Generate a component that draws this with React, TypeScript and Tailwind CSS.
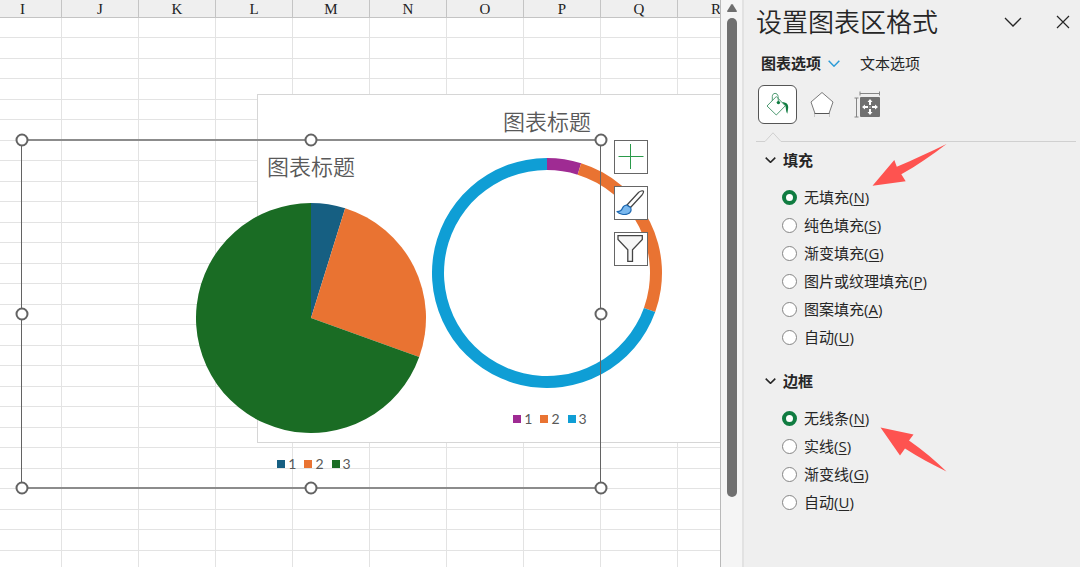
import type { ReactNode } from 'react';

type Slice = { label: string; value: number; fill: string; swatch: string };

const columns = ['I', 'J', 'K', 'L', 'M', 'N', 'O', 'P', 'Q', 'R'];
const rows = Array.from({ length: 27 }, (_, i) => i);

const pieData: Slice[] = [
  { label: '1', value: 4.8, fill: 'fill-[#165f82]', swatch: 'bg-[#165f82]' },
  { label: '2', value: 25.7, fill: 'fill-[#e97332]', swatch: 'bg-[#e97332]' },
  { label: '3', value: 69.5, fill: 'fill-[#1a6c24]', swatch: 'bg-[#1a6c24]' },
];

const ringData: Slice[] = [
  { label: '1', value: 4.8, fill: 'fill-[#9f2b93]', swatch: 'bg-[#9f2b93]' },
  { label: '2', value: 25.7, fill: 'fill-[#e97332]', swatch: 'bg-[#e97332]' },
  { label: '3', value: 69.5, fill: 'fill-[#0f9ed5]', swatch: 'bg-[#0f9ed5]' },
];

const fillOptions = [
  { text: '无填充', hotkey: 'N' },
  { text: '纯色填充', hotkey: 'S' },
  { text: '渐变填充', hotkey: 'G' },
  { text: '图片或纹理填充', hotkey: 'P' },
  { text: '图案填充', hotkey: 'A' },
  { text: '自动', hotkey: 'U' },
];

const borderOptions = [
  { text: '无线条', hotkey: 'N' },
  { text: '实线', hotkey: 'S' },
  { text: '渐变线', hotkey: 'G' },
  { text: '自动', hotkey: 'U' },
];

const handles = [
  'left-0 -top-px',
  'left-1/2 -top-px',
  'left-[calc(100%+1px)] -top-px',
  'left-0 top-1/2',
  'left-[calc(100%+1px)] top-1/2',
  'left-0 top-[calc(100%+1px)]',
  'left-1/2 top-[calc(100%+1px)]',
  'left-[calc(100%+1px)] top-[calc(100%+1px)]',
];

function slicePath(from: number, to: number, outer: number, inner: number) {
  const point = (share: number, r: number) => {
    const a = (share / 100) * Math.PI * 2;
    return `${(115 + r * Math.sin(a)).toFixed(2)} ${(115 - r * Math.cos(a)).toFixed(2)}`;
  };
  const large = to - from > 50 ? 1 : 0;
  return `M${point(from, outer)}A${outer} ${outer} 0 ${large} 1 ${point(to, outer)}L${point(to, inner)}A${inner} ${inner} 0 ${large} 0 ${point(from, inner)}Z`;
}

function Chart({ data, inner, className }: { data: Slice[]; inner: number; className: string }) {
  let start = 0;

  return (
    <section className={`absolute flex w-[580px] flex-col items-center text-[#595959] ${className}`}>
      <h2 className="text-[22px] leading-7 font-[350]">图表标题</h2>
      <svg viewBox="0 0 230 230" className="mt-[23px] size-[230px]" aria-hidden="true">
        {data.map((slice) => {
          const from = start;
          start += slice.value;
          return <path key={slice.label} d={slicePath(from, start, 115, inner)} className={slice.fill} />;
        })}
      </svg>
      <ul className="mt-[21px] flex gap-2 pl-[6px] font-[Lato,sans-serif] text-sm leading-5">
        {data.map((slice) => (
          <li key={slice.label} className="flex items-center gap-[3px]">
            <span className={`size-2 ${slice.swatch}`} />
            {slice.label}
          </li>
        ))}
      </ul>
    </section>
  );
}

function ChartButton({ label, children }: { label: string; children: ReactNode }) {
  return (
    <button type="button" aria-label={label} className="size-[34px] border border-[#666] bg-white">
      <svg viewBox="1 1 32 32" className="size-8" fill="none" strokeLinejoin="round">
        {children}
      </svg>
    </button>
  );
}

function Selection() {
  return (
    <div className="pointer-events-none absolute left-[21px] top-[139px] h-[350px] w-[580px] border-x border-y-2 border-x-[#636363] border-y-[#8c8c8c]">
      {handles.map((place) => (
        <span
          key={place}
          className={`absolute size-[13px] -translate-x-1/2 -translate-y-1/2 rounded-full border-2 border-[#636363] bg-white ${place}`}
        />
      ))}
      <div className="pointer-events-auto absolute -top-px left-full ml-[14px] flex flex-col gap-3">
        <ChartButton label="图表元素">
          <path d="M4.5 16.5h25M16.5 4v25" stroke="#2a9a4a" />
        </ChartButton>
        <ChartButton label="图表样式">
          <path
            d="M13 19 24.5 6.5C26 5 28.500 4.500 29.300 5S29 7.500 28 9L16.500 21.500Z"
            fill="#fff"
            stroke="#444"
            strokeWidth="1.200"
          />
          <path
            d="M12.500 19c-2.500.3-3.500 1.500-4.200 3.500-.6 1.800-2.500 3-5.300 3.200 2.500 2.600 7.500 3.400 10.500 2.300 3.200-1.200 4-4 3.200-6.400Z"
            fill="#7ab8ee"
            stroke="#1c67b0"
            strokeWidth="1.200"
          />
        </ChartButton>
        <ChartButton label="图表筛选器">
          <path
            d="M4 3.700h24.300v3.800l-9.800 10.200v11.600h-4.700V17.700L4 7.500Z"
            fill="#f6f6f6"
            stroke="#444"
            strokeWidth="1.300"
            strokeLinejoin="miter"
          />
        </ChartButton>
      </div>
    </div>
  );
}

function Sheet() {
  return (
    <main className="relative min-w-0 flex-1 overflow-hidden bg-white">
      <table className="-ml-4 w-[771px] table-fixed border-separate border-spacing-0">
        <thead>
          <tr className="h-[18px]">
            {columns.map((name) => (
              <th
                key={name}
                scope="col"
                className="w-[77px] border-b border-r border-[#c4c4c4] bg-[#efefef] p-0 font-['Liberation_Serif',serif] text-[15px] leading-4 font-normal text-[#222] first:w-[78px]"
              >
                {name}
              </th>
            ))}
          </tr>
        </thead>
        <tbody>
          {rows.map((row) => (
            <tr key={row} className="odd:h-5 even:h-[21px]">
              {columns.map((name) => (
                <td key={name} className="border-b border-r border-[#e3e3e3] p-0" />
              ))}
            </tr>
          ))}
        </tbody>
      </table>

      <Chart data={ringData} inner={103} className="left-[257px] top-[94px] h-[349px] border border-[#d6d6d6] bg-white pt-3" />
      <Chart data={pieData} inner={0} className="left-[21px] top-[139px] h-[350px] pt-[13px]" />
      <Selection />
    </main>
  );
}

function ScrollBar() {
  return (
    <div className="flex w-6 shrink-0 flex-col items-center border-l border-r-2 border-l-[#b9b9b9] border-r-[#e2e2e2] bg-[#f5f5f5] pt-1">
      <svg viewBox="0 0 10 8" className="h-2 w-[10px] shrink-0 fill-[#6f6f6f]" aria-hidden="true">
        <path d="M4.200.6a1 1 0 0 1 1.600 0L9.900 7q.2.900-.7.900H.8Q-.1 7.900.1 7Z" />
      </svg>
      <div className="mt-[6px] h-[479px] w-[10px] shrink-0 rounded-full bg-[#707070]" />
    </div>
  );
}

function Chevron({ className }: { className: string }) {
  return (
    <svg viewBox="0 0 18 10" className={className} fill="none" stroke="currentColor" aria-hidden="true">
      <path d="m1 1 8 8 8-8" vectorEffect="non-scaling-stroke" />
    </svg>
  );
}

function OptionGroup({ title, name, options }: { title: string; name: string; options: typeof fillOptions }) {
  return (
    <section className="pl-[21px]">
      <h2>
        <button type="button" className="flex items-center gap-[7px] text-[15px] leading-5 font-bold">
          <Chevron className="h-[6px] w-[11px] stroke-[1.5]" />
          {title}
        </button>
      </h2>
      <div role="radiogroup" aria-label={title} className="mt-[13px] pl-[17px]">
        {options.map((option, i) => (
          <label key={option.hotkey} className="flex h-7 items-center gap-[7px] text-[15px] leading-5">
            <input
              type="radio"
              name={name}
              defaultChecked={i === 0}
              className="size-[15px] appearance-none rounded-full border border-[#858585] bg-white checked:border-4 checked:border-[#107c41]"
            />
            <span>
              {option.text}(<span className="underline underline-offset-2">{option.hotkey}</span>)
            </span>
          </label>
        ))}
      </div>
    </section>
  );
}

function FormatPane() {
  return (
    <aside className="relative w-[336px] shrink-0 bg-[#efefef] text-[#262626]">
      <header className="flex h-11 items-center pl-3 pr-[10px]">
        <h1 className="flex-1 text-[26px] leading-8 font-[350]">设置图表区格式</h1>
        <button type="button" aria-label="任务窗格选项">
          <Chevron className="h-[10px] w-[18px] stroke-[1.3]" />
        </button>
        <button type="button" aria-label="关闭" className="ml-[34px]">
          <svg viewBox="0 0 14 14" className="size-[14px]" fill="none" stroke="currentColor" strokeWidth="1.200">
            <path d="m1 1 12 12M13 1 1 13" />
          </svg>
        </button>
      </header>

      <div className="flex h-[38px] items-center pl-[17px] text-[15px] leading-5">
        <button type="button" className="flex items-center gap-[7px] font-bold">
          图表选项
          <Chevron className="h-[7px] w-3 text-[#2b9bd7] stroke-[1.5]" />
        </button>
        <button type="button" className="ml-5">
          文本选项
        </button>
      </div>

      <div className="mt-[3px] flex items-center pl-[14px]">
        <button
          type="button"
          aria-label="填充与线条"
          className="flex size-[39px] items-center justify-center rounded-md border border-[#555] bg-white"
        >
          <svg viewBox="0 0 39 39" className="size-[39px] shrink-0" fill="none">
            <path d="m9 21 9.300-9.500 9 9.300-9 9.200Z" stroke="#4f9b73" />
            <path d="M14.300 16v-4.500c0-4 5.400-4.300 5.800 0l.3 6" stroke="#4f9b73" />
            <circle cx="20.400" cy="17.600" r="1.700" fill="#107c41" />
            <path d="M24 17.200c4.300-.2 6.400 2 6.200 5.300-.1 2-.6 4-.9 6.200-1.600-2.200-1.200-6-2-8.300Z" fill="#107c41" />
          </svg>
        </button>
        <button type="button" aria-label="效果" className="ml-[13px]">
          <svg viewBox="0 0 24 27" className="h-[27px] w-6" fill="none">
            <path d="M12 1.500 23 11l-4 11.500H5L1 11Z" fill="#fff" stroke="#7a7a7a" />
            <path d="M4.500 22.500h15" stroke="#555" />
            <path d="M4.500 23v3M19.500 23v3" stroke="#c9c9c9" />
          </svg>
        </button>
        <button type="button" aria-label="大小与属性" className="ml-5">
          <svg viewBox="0 0 26 27" className="h-[27px] w-[26px]" fill="none">
            <path d="M6 .5v4M25.500.5v4M6 2.500h19.500M.5 7h4M.5 26h4M2.500 7v19" stroke="#858585" />
            <rect x="6" y="6" width="20" height="20" rx="1" fill="#707070" />
            <path
              d="m16 8 2.500 3H17v3h-2v-3h-1.500Zm0 16 2.500-3H17v-3h-2v3h-1.500ZM8 16l3-2.500V15h3v2h-3v1.500Zm16 0-3-2.500V15h-3v2h3v1.500Z"
              fill="#fff"
            />
            <path d="M15.500 16h1" stroke="#fff" />
          </svg>
        </button>
      </div>

      <div className="mt-[7px] flex h-[11px] items-end pl-3 pr-1" aria-hidden="true">
        <span className="w-[9px] border-b border-[#d0d0d0]" />
        <svg viewBox="0 0 16 10" className="h-[10px] w-4" fill="none" stroke="#d0d0d0">
          <path d="M0 9.500 8 .8l8 8.700" />
        </svg>
        <span className="flex-1 border-b border-[#d0d0d0]" />
      </div>

      <div className="mt-2 flex flex-col gap-5">
        <OptionGroup title="填充" name="fill" options={fillOptions} />
        <OptionGroup title="边框" name="border" options={borderOptions} />
      </div>

      <svg viewBox="0 0 75 42" className="absolute left-[128px] top-[144px] w-[75px]" fill="#fe5350" aria-hidden="true">
        <path d="M.5 41.700 22.300 16 24.800 22.700C41 16 58 8 74.500 0 60 11 45 21.500 29.300 30.300l4.400 7Z" />
      </svg>
      <svg viewBox="0 0 67 45" className="absolute left-[136px] top-[427px] w-[67px]" fill="#fe5350" aria-hidden="true">
        <path d="M.5.500 33.500 7.500 29 13.500C43 23.500 56 34 66.500 44.500 53 38 38 30 25 21.500l-5 7Z" />
      </svg>
    </aside>
  );
}

function App() {
  return (
    <div className="flex h-screen overflow-hidden font-['Open_Sans','Noto_Sans_CJK_SC',sans-serif]">
      <Sheet />
      <ScrollBar />
      <FormatPane />
    </div>
  );
}

export default App;
